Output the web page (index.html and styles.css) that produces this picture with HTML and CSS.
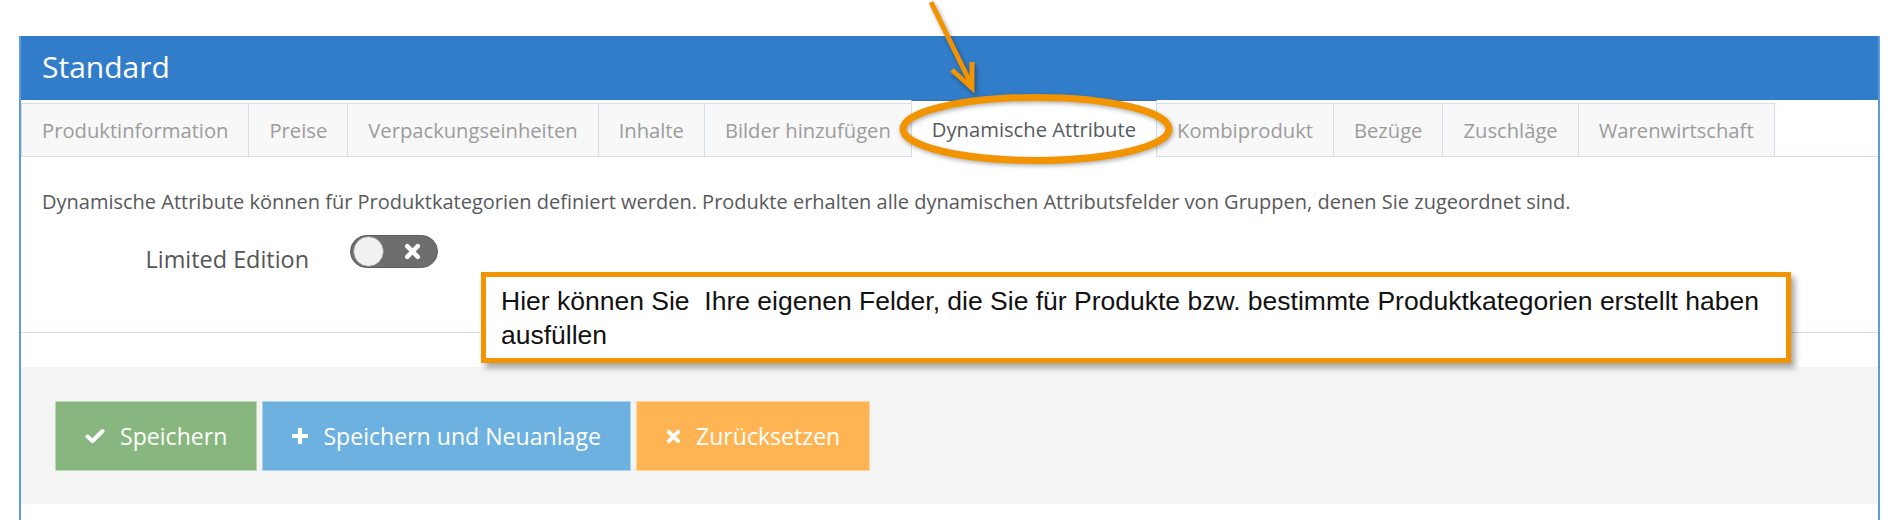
FILE: index.html
```html
<!DOCTYPE html>
<html lang="de">
<head>
    <meta charset="UTF-8">
    <meta name="viewport" content="width=device-width, initial-scale=1.0">
    <title>Produkt bearbeiten</title>
    <link rel="stylesheet" href="styles.css">
</head>
<body>
    <!-- Panel -->
    <div class="panel">
        <div class="panel-heading">Standard</div>
        <ul class="tabs">
            <li class="tab">Produktinformation</li>
            <li class="tab">Preise</li>
            <li class="tab">Verpackungseinheiten</li>
            <li class="tab">Inhalte</li>
            <li class="tab">Bilder hinzufügen</li>
            <li class="tab active">Dynamische Attribute</li>
            <li class="tab">Kombiprodukt</li>
            <li class="tab">Bezüge</li>
            <li class="tab">Zuschläge</li>
            <li class="tab">Warenwirtschaft</li>
        </ul>
        <div class="tab-content">
            <p class="hint">Dynamische Attribute können für Produktkategorien definiert werden. Produkte erhalten alle dynamischen Attributsfelder von Gruppen, denen Sie zugeordnet sind.</p>
            <div class="attr-row">
                <label class="attr-label">Limited Edition</label>
                <span class="switch">
                    <span class="knob"></span>
                    <svg class="switch-x" viewBox="0 0 16 16" width="17" height="17"><path d="M3 3 L13 13 M13 3 L3 13" stroke="#fff" stroke-width="4.2" stroke-linecap="round"/></svg>
                </span>
            </div>
        </div>
        <div class="form-actions">
            <button class="btn btn-save">
                <svg class="icon" viewBox="0 0 20 16" width="20" height="16"><path d="M2.5 8.5 L7.5 13 L17.5 3" fill="none" stroke="#fff" stroke-width="4" stroke-linecap="round" stroke-linejoin="round"/></svg>
                Speichern
            </button>
            <button class="btn btn-new">
                <svg class="icon" viewBox="0 0 16 16" width="16" height="16"><path d="M8 1 V15 M1 8 H15" stroke="#fff" stroke-width="4.2" stroke-linecap="round"/></svg>
                Speichern und Neuanlage
            </button>
            <button class="btn btn-reset">
                <svg class="icon" viewBox="0 0 16 16" width="15" height="15"><path d="M3 3 L13 13 M13 3 L3 13" stroke="#fff" stroke-width="4" stroke-linecap="round"/></svg>
                Zurücksetzen
            </button>
        </div>
    </div>

    <!-- Hinweis-Box -->
    <div class="callout">Hier können Sie&nbsp; Ihre eigenen Felder, die Sie für Produkte bzw. bestimmte Produktkategorien erstellt haben<br>ausfüllen</div>

    <!-- Pfeil und Markierung -->
    <svg class="marks" width="1891" height="520" viewBox="0 0 1891 520">
        <g class="arrow">
            <path d="M931 2 L971 84" stroke="#f29400" stroke-width="5" fill="none"/>
            <path d="M952 70 L972 88 L972 62" stroke="#f29400" stroke-width="5" fill="none" stroke-linejoin="miter"/>
        </g>
        <ellipse class="ring" cx="1036" cy="129" rx="133" ry="31.5" fill="none" stroke="#f29400" stroke-width="7"/>
    </svg>
</body>
</html>
```

FILE: styles.css
```css
*{
    padding: 0;
    margin: 0;
    box-sizing: border-box;
}
body{
    position: relative;
    width: 1891px;
    height: 520px;
    overflow: hidden;
    background-color: #fff;
    font-family: "Open Sans", "Noto Sans", sans-serif;
    color: #555;
}
.panel{
    margin: 36px 0 0 19px;
    width: 1861px;
    height: 484px;
    border-left: 2px solid #5e9bd8;
    border-right: 2px solid #5e9bd8;
}
.panel-heading{
    height: 64px;
    padding-left: 21px;
    line-height: 62px;
    font-size: 30px;
    color: #fff;
    background-color: #317dc9;
}
.tabs{
    display: flex;
    align-items: flex-end;
    height: 57px;
    list-style: none;
    border-bottom: 1px solid #d5dde6;
}
.tab{
    height: 53px;
    margin-right: -1px;
    padding: 0 20px;
    line-height: 52px;
    font-size: 20.2px;
    color: #9c9c9c;
    background-color: #f8f8f8;
    border: 1px solid #d5dde6;
    border-bottom: none;
    white-space: nowrap;
}
.tab.active{
    position: relative;
    height: 57px;
    margin-bottom: -1px;
    line-height: 57px;
    color: #56595e;
    background-color: #fff;
    border-top: 1px solid #3f6f9e;
}
.tab-content{
    padding: 31px 21px 57px;
    border-bottom: 1px solid #d5dde6;
}
.hint{
    line-height: 28px;
    font-size: 20px;
    color: #58595b;
}
.attr-row{
    display: flex;
    align-items: flex-start;
    margin-top: 17px;
}
.attr-label{
    width: 267px;
    padding-top: 10px;
    line-height: 32px;
    font-size: 23.4px;
    text-align: right;
}
.switch{
    display: flex;
    align-items: center;
    width: 88px;
    height: 33px;
    margin: 2px 0 0 41px;
    padding: 0 2px;
    border-radius: 17px;
    background-color: #6d6d6d;
    border: 1px solid #5d5d5d;
}
.knob{
    width: 31px;
    height: 31px;
    border-radius: 50%;
    background-color: #f1f1f1;
    border: 1px solid #8a8a8a;
}
.switch-x{
    margin-left: 20px;
}
.form-actions{
    display: flex;
    gap: 5px;
    margin-top: 34px;
    padding: 34px 0 33px 34px;
    background-color: #f4f4f4;
}
.btn{
    display: flex;
    align-items: center;
    height: 70px;
    padding: 0 29px;
    font-family: "Open Sans", sans-serif;
    font-size: 23.1px;
    color: #fff;
    border: 1px solid rgba(255, 255, 255, 0.45);
    cursor: pointer;
}
.btn .icon{
    margin-right: 15px;
}
.btn-save{
    background-color: #87b77e;
}
.btn-new{
    background-color: #6cb1df;
}
.btn-reset{
    background-color: #feb453;
}
.callout{
    position: absolute;
    left: 481px;
    top: 272px;
    width: 1310px;
    height: 91px;
    padding: 7px 0 0 15px;
    font-family: "Liberation Sans", Arial, sans-serif;
    font-size: 26.5px;
    line-height: 34px;
    color: #111;
    background-color: #fff;
    border: 5px solid #f29400;
    box-shadow: 4px 5px 6px rgba(0, 0, 0, 0.35);
}
.marks{
    position: absolute;
    left: 0;
    top: 0;
    pointer-events: none;
}
.arrow{
    filter: drop-shadow(2px 3px 2px rgba(0, 0, 0, 0.35));
}
.ring{
    filter: drop-shadow(1px 2px 2px rgba(0, 0, 0, 0.3));
}
```
